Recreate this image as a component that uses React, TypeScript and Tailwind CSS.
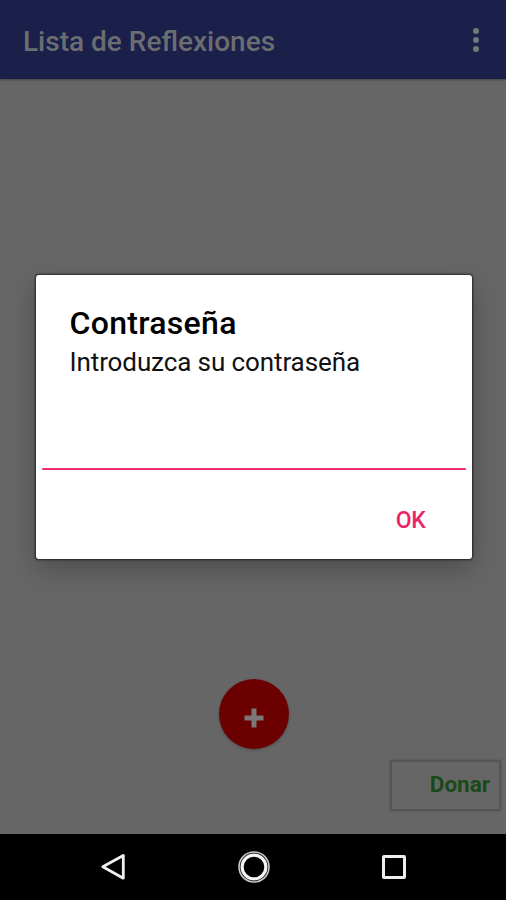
import type { ReactNode } from "react";

function AppBar() {
  return (
    <header className="flex h-[79px] items-center justify-between bg-[#1a2049] pr-[27px] pl-[23px] shadow-[0_1px_2px_rgba(0,0,0,0.35)]">
      <h1 className="pt-1 text-[28px] leading-8 font-medium whitespace-nowrap text-[#6c6d72]">
        Lista de Reflexiones
      </h1>
      <div className="flex flex-col gap-[2.6px] pt-px">
        <span className="size-[6px] rounded-full bg-[#747779]" />
        <span className="size-[6px] rounded-full bg-[#747779]" />
        <span className="size-[6px] rounded-full bg-[#747779]" />
      </div>
    </header>
  );
}

function PasswordDialog() {
  return (
    <section
      role="dialog"
      className="absolute top-[274.5px] left-[35.5px] flex h-[284.5px] w-[436px] flex-col rounded-[3px] bg-white text-black shadow-[0_0_2px_1px_rgba(0,0,0,0.6),0_10px_26px_0_rgba(0,0,0,0.25)]"
    >
      <div className="px-[34px] pt-[30.5px]">
        <h2 className="text-[32px] leading-9 font-medium tracking-[0.3px] whitespace-nowrap">
          Contraseña
        </h2>
        <p className="pt-[5px] text-[26px] leading-8 tracking-[-0.1px] whitespace-nowrap text-[#111111]">
          Introduzca su contraseña
        </p>
      </div>
      <div className="mx-[6px] mt-auto mb-[89px] h-[2.5px] rounded-full bg-[#ee2a73]" />
      <button className="absolute right-[46px] bottom-[24px] text-[23px] leading-7 font-medium tracking-[-0.3px] text-[#ec2468]">
        OK
      </button>
    </section>
  );
}

function NavButton({ children }: { children: ReactNode }) {
  return (
    <button className="flex h-full w-[140.5px] items-center justify-center">
      {children}
    </button>
  );
}

function NavigationBar() {
  return (
    <nav className="flex h-[66.5px] justify-center bg-black pl-px">
      <NavButton>
        <svg width="40" height="40" viewBox="0 0 40 40" fill="none">
          <path
            d="M30.3 8.5V31.2L9.8 19.8Z"
            stroke="#f0f0f0"
            strokeWidth="2.8"
            strokeLinejoin="round"
          />
        </svg>
      </NavButton>
      <NavButton>
        <svg width="40" height="40" viewBox="0 0 40 40" fill="none">
          <circle cx="20" cy="20" r="15" stroke="#c8c8c8" strokeWidth="1.6" />
          <circle cx="20" cy="20" r="11.9" stroke="#f4f4f4" strokeWidth="3.2" />
        </svg>
      </NavButton>
      <NavButton>
        <span className="size-[24px] rounded-[2px] border-3 border-[#eeeeee]" />
      </NavButton>
    </nav>
  );
}

export default function App() {
  return (
    <div className="relative flex h-[900px] w-[506px] flex-col overflow-hidden bg-[#666666] font-['Roboto',sans-serif]">
      <AppBar />
      <main className="flex flex-1 flex-col items-center justify-end pb-[23px] pl-px">
        <button className="flex size-[70px] items-center justify-center rounded-full bg-[#6b0000] pt-[9px] shadow-[0_1px_3px_rgba(0,0,0,0.25)]">
          <svg width="20" height="20" viewBox="0 0 20 20">
            <path d="M10 0.5V19.5M0.5 10H19.5" stroke="#7c7878" strokeWidth="5" />
          </svg>
        </button>
        <button className="mt-[11px] mr-[5px] flex h-[51px] w-[111px] items-center justify-end self-end border-2 border-[#555555] pr-[9px] text-[22.5px] font-bold text-[#1b4a18] shadow-[0_0_2px_rgba(0,0,0,0.2)]">
          Donar
        </button>
      </main>
      <NavigationBar />
      <PasswordDialog />
    </div>
  );
}
